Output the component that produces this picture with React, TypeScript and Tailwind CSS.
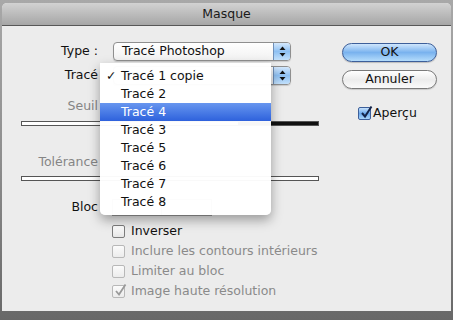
// App.tsx — "Masque" dialog with open path popup

const items = ["Tracé 1 copie", "Tracé 2", "Tracé 4", "Tracé 3", "Tracé 5", "Tracé 6", "Tracé 7", "Tracé 8"];

function Arrows() {
  return (
    <svg width="7" height="11" viewBox="0 0 7 11">
      <path d="M3.5 0.5 L6.5 4 L0.5 4 Z" fill="#111" />
      <path d="M3.5 10.5 L6.5 7 L0.5 7 Z" fill="#111" />
    </svg>
  );
}

function Select({ label }: { label: string }) {
  return (
    <div className="ml-[15px] w-[178px] h-[19px] rounded-[4px] border border-[#8f8f8f] bg-gradient-to-b from-[#ffffff] to-[#f1f1f1] flex items-stretch shadow-[0_1px_1px_rgba(0,0,0,0.15)]">
      <span className="pl-[8px] flex items-center leading-none">{label}</span>
      <div className="ml-auto w-[17px] rounded-r-[3px] border-l border-[#6f8fb8] bg-gradient-to-b from-[#d4e8fc] via-[#8ec0f2] to-[#c2e0fb] flex items-center justify-center">
        <Arrows />
      </div>
    </div>
  );
}

function Checkbox({ checked, disabled }: { checked?: boolean; disabled?: boolean }) {
  return (
    <div
      className={
        disabled
          ? "relative w-[13px] h-[13px] rounded-[2px] border border-[#b8b8b8] bg-gradient-to-b from-[#fbfbfb] to-[#ececec]"
          : "relative w-[13px] h-[13px] rounded-[2px] border border-[#7c7c7c] bg-gradient-to-b from-[#ffffff] to-[#e6e6e6]"
      }
    >
      {checked && (
        <svg className="absolute -top-[3px] left-[1px]" width="13" height="14" viewBox="0 0 13 14">
          <path d="M2 8 L5 11.5 L11.5 1.5" stroke="#9a9a9a" strokeWidth="1.8" fill="none" />
        </svg>
      )}
    </div>
  );
}

export default function App() {
  return (
    <div className="w-[453px] h-[320px] overflow-hidden pt-[3px] pl-[2px] bg-gradient-to-b from-[#a8a8a8] via-[#8e8e8e] to-[#686868] font-['DejaVu_Sans',sans-serif] text-[12.5px] text-[#111]">
      <div className="w-[449px] h-[308px] rounded-t-[5px] overflow-hidden bg-[#ececec] flex flex-col">
        {/* Title bar */}
        <div className="h-[23px] shrink-0 border-b border-[#575757] bg-gradient-to-b from-[#d2d2d2] to-[#a6a6a6] flex items-center justify-center">
          <span className="text-[#1a1a1a]">Masque</span>
        </div>

        <div className="relative flex-1 flex">
          {/* Left form */}
          <div className="w-[318px] flex flex-col">
            <div className="mt-[16px] h-[19px] flex items-center">
              <span className="w-[96px] text-right">Type :</span>
              <Select label="Tracé Photoshop" />
            </div>
            <div className="mt-[5px] h-[19px] flex items-center">
              <span className="w-[96px] text-right">Tracé</span>
              <Select label="Tracé 1 copie" />
            </div>

            <div className="mt-[13px] h-[16px] flex items-center">
              <span className="w-[96px] text-right text-[#858585]">Seuil</span>
            </div>
            <div className="mt-[7px] ml-[19px] w-[298px] h-[5px] border border-[#555] bg-white flex">
              <div className="flex-1" />
              <div className="w-[80px] bg-[#111]" />
            </div>

            <div className="mt-[28px] h-[16px] flex items-center">
              <span className="w-[96px] text-right text-[#858585]">Tolérance</span>
            </div>
            <div className="mt-[6px] ml-[19px] w-[298px] h-[5px] border border-[#555] bg-white" />

            <div className="mt-[18px] h-[17px] flex items-center">
              <span className="w-[96px] text-right">Bloc</span>
              <div className="ml-[14px] w-[100px] h-[17px] border border-[#9a9a9a] bg-white flex">
                <div className="w-[49px] border-r border-[#9a9a9a]" />
              </div>
            </div>

            <div className="mt-[5px] flex flex-col">
              {[
                { t: "Inverser", d: false, c: false },
                { t: "Inclure les contours intérieurs", d: true, c: false },
                { t: "Limiter au bloc", d: true, c: false },
                { t: "Image haute résolution", d: true, c: true },
              ].map((r) => (
                <div key={r.t} className="h-[20px] ml-[110px] flex items-center gap-[6px] whitespace-nowrap">
                  <Checkbox checked={r.c} disabled={r.d} />
                  <span className={r.d ? "text-[#8a8a8a]" : ""}>{r.t}</span>
                </div>
              ))}
            </div>
          </div>

          {/* Right buttons */}
          <div className="ml-[22px] w-[95px] flex flex-col">
            <button className="mt-[17px] h-[19px] rounded-full border border-[#3d5f9a] bg-gradient-to-b from-[#cfe6fc] via-[#79b2ee] to-[#b4dcfb] flex items-center justify-center leading-none shadow-[0_1px_1px_rgba(0,0,0,0.2)]">
              OK
            </button>
            <button className="mt-[8px] h-[19px] rounded-full border border-[#7a7a7a] bg-gradient-to-b from-[#ffffff] via-[#ececec] to-[#fafafa] flex items-center justify-center leading-none shadow-[0_1px_1px_rgba(0,0,0,0.15)]">
              Annuler
            </button>
            <div className="mt-[15px] ml-[16px] flex items-center gap-[2px]">
              <div className="relative w-[13px] h-[13px] rounded-[2px] border border-[#3d5f9a] bg-gradient-to-b from-[#c6e1fb] via-[#6aa8ec] to-[#a9d4fa]">
                <svg className="absolute -top-[3px] left-[1px]" width="13" height="14" viewBox="0 0 13 14">
                  <path d="M2 8 L5 11.5 L11.5 1.5" stroke="#14244a" strokeWidth="2" fill="none" />
                </svg>
              </div>
              <span>Aperçu</span>
            </div>
          </div>

          {/* Open popup menu */}
          <div className="absolute left-[98px] top-[37px] w-[171px] h-[152px] pt-[4px] rounded-b-[5px] bg-white/[0.97] shadow-[0_5px_12px_rgba(0,0,0,0.35)]">
            {items.map((it, i) => (
              <div
                key={it}
                className={
                  i === 2
                    ? "h-[18px] flex items-center bg-gradient-to-b from-[#6896ef] to-[#2e61dc] text-white"
                    : "h-[18px] flex items-center"
                }
              >
                <span className="w-[21px] pl-[6px]">{i === 0 ? "✓" : ""}</span>
                <span>{it}</span>
              </div>
            ))}
          </div>
        </div>
      </div>
    </div>
  );
}
